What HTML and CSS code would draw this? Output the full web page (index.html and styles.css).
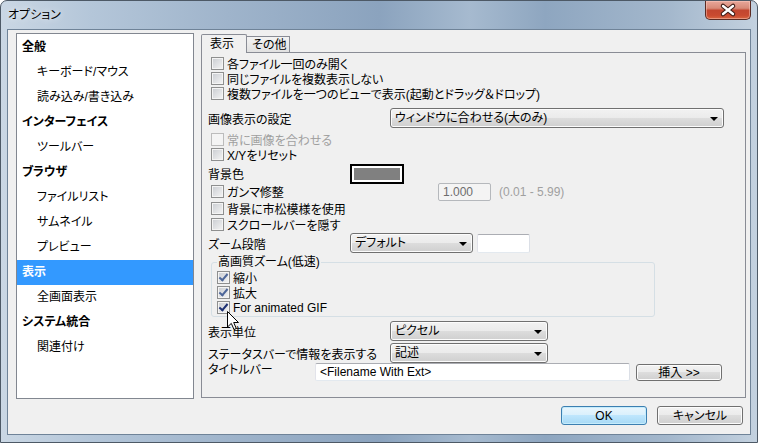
FILE: index.html
```html
<!DOCTYPE html>
<html lang="ja">
<head>
  <meta charset="UTF-8">
  <title>オプション</title>
  <link rel="stylesheet" href="styles.css">
</head>
<body>
  <div class="window">
    <div class="titlebar">
      <span class="title">オプション</span>
      <button class="close-btn" title="閉じる">
        <svg width="44" height="17" viewBox="0 0 44 17">
          <path d="M17 4 L27 12 M27 4 L17 12" stroke="#3b1a14" stroke-width="4.5" stroke-linecap="round"/>
          <path d="M17 4 L27 12 M27 4 L17 12" stroke="#fff" stroke-width="2.4" stroke-linecap="round"/>
        </svg>
      </button>
    </div>

    <div class="client">
      <div class="main">
        <!-- 左のカテゴリ -->
        <ul class="tree">
          <li class="cat">全般</li>
          <li class="sub">キーボード/マウス</li>
          <li class="sub">読み込み/書き込み</li>
          <li class="cat">インターフェイス</li>
          <li class="sub">ツールバー</li>
          <li class="cat">ブラウザ</li>
          <li class="sub">ファイルリスト</li>
          <li class="sub">サムネイル</li>
          <li class="sub">プレビュー</li>
          <li class="cat selected">表示</li>
          <li class="sub">全画面表示</li>
          <li class="cat">システム統合</li>
          <li class="sub">関連付け</li>
        </ul>

        <!-- タブ -->
        <div class="tabs">
          <div class="tab-strip">
            <span class="tab active">表示</span>
            <span class="tab">その他</span>
          </div>
          <div class="tab-panel">
            <label class="cb-row"><span class="cb"></span>各ファイル一回のみ開く</label>
            <label class="cb-row"><span class="cb"></span>同じファイルを複数表示しない</label>
            <label class="cb-row"><span class="cb"></span>複数ファイルを一つのビューで表示(起動とドラッグ＆ドロップ)</label>

            <div class="field-row row-fit">
              <span class="lbl lbl-wide">画像表示の設定</span>
              <div class="select select-fit">ウィンドウに合わせる(大のみ)<i class="arrow"></i></div>
            </div>

            <label class="cb-row disabled row-always"><span class="cb"></span>常に画像を合わせる</label>
            <label class="cb-row"><span class="cb"></span>X/Yをリセット</label>

            <div class="field-row row-bg">
              <span class="lbl lbl-mid">背景色</span>
              <div class="swatch"><span></span></div>
            </div>

            <div class="cb-row row-gamma">
              <label class="cb-label"><span class="cb"></span>ガンマ修整</label>
              <div class="input input-small disabled">1.000</div>
              <span class="range">(0.01 - 5.99)</span>
            </div>

            <label class="cb-row row-checker"><span class="cb"></span>背景に市松模様を使用</label>
            <label class="cb-row row-scroll"><span class="cb"></span>スクロールバーを隠す</label>

            <div class="field-row">
              <span class="lbl lbl-mid">ズーム段階</span>
              <div class="select select-zoom">デフォルト<i class="arrow"></i></div>
              <div class="input input-small input-zoom"></div>
            </div>

            <fieldset class="group">
              <legend>高画質ズーム(低速)</legend>
              <label class="cb-row"><span class="cb checked"></span>縮小</label>
              <label class="cb-row"><span class="cb checked"></span>拡大</label>
              <label class="cb-row"><span class="cb checked hot"></span>For animated GIF</label>
            </fieldset>

            <div class="field-row row-unit">
              <span class="lbl lbl-wide">表示単位</span>
              <div class="select select-unit">ピクセル<i class="arrow"></i></div>
            </div>
            <div class="field-row row-status">
              <span class="lbl lbl-wide">ステータスバーで情報を表示する</span>
              <div class="select select-unit">記述<i class="arrow"></i></div>
            </div>
            <div class="field-row row-title">
              <span class="lbl lbl-short">タイトルバー</span>
              <div class="input input-title">&lt;Filename With Ext&gt;</div>
              <button class="btn btn-insert">挿入 &gt;&gt;</button>
            </div>
          </div>
        </div>
      </div>

      <div class="footer">
        <button class="btn btn-ok">OK</button>
        <button class="btn">キャンセル</button>
      </div>
    </div>

    <!-- マウスカーソル -->
    <svg class="cursor" width="13" height="20" viewBox="0 0 13 20">
      <path d="M0.5 0.5 L0.5 16 L4.3 12.4 L7 18.5 L9.3 17.5 L6.7 11.5 L11.5 11.5 Z" fill="#fff" stroke="#000" stroke-width="1" stroke-linejoin="miter"/>
    </svg>
  </div>
</body>
</html>
```

FILE: styles.css
```css
body {
  margin: 0;
  background: #fff;
  font-family: "Liberation Sans", "Noto Sans CJK JP", sans-serif;
  font-size: 12px;
  font-feature-settings: "palt";
  color: #000;
}
.window {
  position: relative;
  width: 758px;
  height: 443px;
  box-sizing: border-box;
  border: 1px solid #4d5966;
  border-radius: 7px 7px 0 0;
  padding: 0 6px 7px;
  display: flex;
  flex-direction: column;
  background: linear-gradient(90deg, #cad7e4 0%, #b4c6d9 12%, #9fb4cb 30%, #8ba3be 50%, #a6bacf 62%, #8ea6c0 72%, #a3b7cc 88%, #c3d1df 100%);
}
.titlebar {
  height: 28px;
  display: flex;
  align-items: flex-start;
  justify-content: space-between;
}
.title {
  margin: 6px 0 0 1px;
  line-height: 16px;
  font-size: 12px;
  text-shadow: 0 0 6px rgba(255, 255, 255, 0.9);
}
.close-btn {
  width: 46px;
  height: 19px;
  margin: 0;
  padding: 0;
  border: 1px solid #5b2b23;
  border-top: none;
  border-radius: 0 0 5px 5px;
  background: linear-gradient(#e8a79a 0%, #d88a78 40%, #c2462f 52%, #c94a30 80%, #d8653f 100%);
  box-shadow: inset 0 0 0 1px rgba(255, 210, 200, 0.45);
  display: flex;
  align-items: center;
  justify-content: center;
}
.client {
  flex: 1;
  border: 1px solid #6f8398;
  background: #f0f0f0;
  padding: 3px 4px 0 8px;
  display: flex;
  flex-direction: column;
}
.main {
  display: flex;
  align-items: flex-start;
}

/* tree */
.tree {
  list-style: none;
  margin: 0;
  padding: 1px 0 0;
  width: 178px;
  height: 366px;
  box-sizing: border-box;
  border: 1px solid #828790;
  background: #fff;
}
.tree li {
  height: 25px;
  line-height: 24px;
  white-space: nowrap;
}
.tree .cat {
  padding-left: 5px;
  font-weight: bold;
}
.tree .sub {
  padding-left: 20px;
}
.tree .selected {
  background: #3399ff;
  color: #fff;
}

/* tabs */
.tabs {
  flex: 1;
  margin: 1px 0 0 7px;
}
.tab-strip {
  display: flex;
  align-items: flex-end;
  height: 18px;
}
.tab {
  box-sizing: border-box;
  border: 1px solid #898c95;
  border-bottom: none;
  line-height: 14px;
}
.tab.active {
  position: relative;
  z-index: 1;
  width: 46px;
  height: 19px;
  margin-bottom: -1px;
  padding: 2px 0 0 8px;
  background: #f0f0f0;
  border-radius: 2px 2px 0 0;
}
.tab:not(.active) {
  width: 44px;
  height: 16px;
  margin-left: -1px;
  padding: 1px 0 0 5px;
  background: linear-gradient(#f3f3f3, #e1e1e1);
}
.tab-panel {
  height: 346px;
  box-sizing: border-box;
  border: 1px solid #898c95;
  background: #f0f0f0;
  padding-top: 3px;
}

/* rows */
.cb-row {
  display: flex;
  align-items: center;
  height: 15px;
  padding-left: 9px;
  white-space: nowrap;
}
.cb-label {
  display: flex;
  align-items: center;
  width: 227px;
}
.cb {
  width: 13px;
  height: 13px;
  box-sizing: border-box;
  margin-right: 3px;
  border: 1px solid #8e8f8f;
  background: linear-gradient(135deg, #c9ccd1, #f5f5f5);
  box-shadow: inset 0 0 0 1px #f4f4f4;
  position: relative;
}
.cb.checked::after {
  content: "";
  position: absolute;
  left: 3px;
  top: 0;
  width: 3px;
  height: 7px;
  border: solid #4d6699;
  border-width: 0 2px 2px 0;
  transform: rotate(40deg);
}
.cb.hot::after {
  border-color: #1c2f72;
}
.disabled {
  color: #a0a0a0;
}
.disabled .cb {
  border-color: #bcbcbc;
  background: #f4f4f4;
}
.field-row {
  display: flex;
  align-items: center;
  height: 20px;
  padding-left: 6px;
  white-space: nowrap;
}
.lbl-wide { width: 182px; }
.lbl-mid { width: 142px; }
.lbl-short { width: 107px; }

.row-fit { margin-top: 7px; }
.row-always { margin-top: 4px; }
.row-bg { margin-top: 2px; height: 19px; }
.row-gamma { height: 17px; }
.row-checker { height: 16px; }
.row-scroll { height: 17px; }
.row-unit { margin-top: 4px; }
.row-status { margin-top: 2px; }
.row-title { height: 18px; align-items: flex-start; }
.row-title .lbl { line-height: 14px; }

.select {
  position: relative;
  height: 20px;
  box-sizing: border-box;
  border: 1px solid #707070;
  border-radius: 3px;
  background: linear-gradient(#f2f2f2 0%, #ebebeb 49%, #dddddd 50%, #cfcfcf 100%);
  box-shadow: inset 0 0 0 1px #fcfcfc;
  padding-left: 4px;
  line-height: 18px;
}
.select-fit { width: 334px; }
.select-zoom { width: 123px; }
.select-unit { width: 158px; }
.arrow {
  position: absolute;
  right: 5px;
  top: 8px;
  border-left: 4px solid transparent;
  border-right: 4px solid transparent;
  border-top: 4px solid #000;
}
.swatch {
  width: 54px;
  height: 20px;
  box-sizing: border-box;
  border: 2px solid #000;
  padding: 2px;
  background: #fff;
}
.swatch span {
  display: block;
  height: 100%;
  background: #808080;
}
.input {
  height: 18px;
  box-sizing: border-box;
  border: 1px solid #abadb3;
  border-color: #abadb3 #dbdfe6 #e3e9ef #e2e3ea;
  background: #fff;
  padding-left: 4px;
  line-height: 16px;
  border-radius: 2px;
}
.input-small { width: 53px; }
.input.disabled {
  color: #6d6d6d;
  background: #f4f4f4;
  border-color: #b5b8bc;
}
.input-zoom {
  margin-left: 4px;
  height: 19px;
}
.input-title { width: 315px; }
.range {
  margin-left: 8px;
  color: #a0a0a0;
}

/* group box */
.group {
  width: 444px;
  box-sizing: border-box;
  margin: 2px 0 0 9px;
  padding: 1px 0 1px 5px;
  border: 1px solid #d5dfe5;
  border-radius: 3px;
}
.group legend {
  padding: 0 1px;
  line-height: 14px;
}
.group .cb-row {
  padding-left: 0;
}

/* buttons */
.btn {
  height: 19px;
  box-sizing: border-box;
  border: 1px solid #707070;
  border-radius: 3px;
  background: linear-gradient(#f2f2f2 0%, #ebebeb 49%, #dddddd 50%, #cfcfcf 100%);
  box-shadow: inset 0 0 0 1px #fcfcfc;
  font: inherit;
  color: #000;
  padding: 0;
  line-height: 16px;
}
.btn-insert {
  width: 86px;
  height: 17px;
  margin-left: 6px;
  margin-top: 1px;
  line-height: 14px;
}
.footer {
  display: flex;
  justify-content: flex-end;
  gap: 10px;
  margin-top: 7px;
  padding-right: 3px;
}
.footer .btn {
  width: 86px;
}
.btn-ok {
  border-color: #3c7fb1;
  background: linear-gradient(#eaf6fd 0%, #d9f0fc 49%, #bee6fd 50%, #a7d9f5 100%);
  box-shadow: inset 0 0 0 1px #c5ecfc;
}

.cursor {
  position: absolute;
  left: 226px;
  top: 310px;
}
```
